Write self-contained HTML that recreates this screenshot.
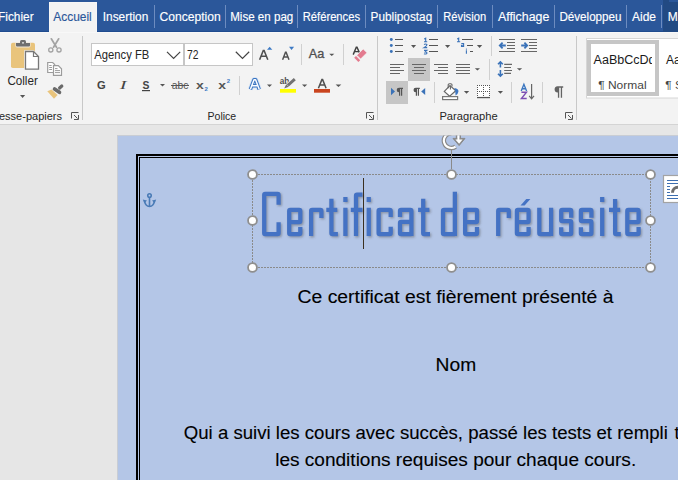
<!DOCTYPE html>
<html><head><meta charset="utf-8">
<style>
html,body{margin:0;padding:0;width:678px;height:480px;overflow:hidden;background:#e6e6e6;}
svg{display:block;font-family:"Liberation Sans",sans-serif;}
</style></head>
<body>
<svg width="678" height="480" viewBox="0 0 678 480">
<defs>
<filter id="sh" x="-10%" y="-10%" width="130%" height="130%">
<feGaussianBlur stdDeviation="0.9"/>
</filter>
</defs>
<!-- TAB BAR -->
<rect x="0" y="0" width="678" height="32" fill="#2b579a"/>
<rect x="0" y="31" width="678" height="1" fill="#204c8f"/>
<rect x="663" y="0" width="15" height="32" fill="#224a83"/>
<rect x="669" y="0" width="9" height="2" fill="#2b579a"/>
<rect x="49" y="2" width="48" height="31" fill="#f6f6f6"/><rect x="50" y="3" width="46" height="30" fill="#f3f3f3"/>
<g fill="#6d8cc0">
<rect x="154" y="5" width="1" height="23"/>
<rect x="225" y="5" width="1" height="23"/>
<rect x="297" y="5" width="1" height="23"/>
<rect x="365" y="5" width="1" height="23"/>
<rect x="437" y="5" width="1" height="23"/>
<rect x="492" y="5" width="1" height="23"/>
<rect x="554" y="5" width="1" height="23"/>
<rect x="626" y="5" width="1" height="23"/>
<rect x="661" y="5" width="1" height="23"/>
</g>
<g font-size="12" fill="#ffffff" stroke="#ffffff" stroke-width="0.15">
<text x="-2" y="21" textLength="35.6" lengthAdjust="spacingAndGlyphs">Fichier</text>
<text x="53.3" y="21" fill="#2b579a" stroke="#2b579a" textLength="38.4" lengthAdjust="spacingAndGlyphs">Accueil</text>
<text x="102.8" y="21" textLength="45.5" lengthAdjust="spacingAndGlyphs">Insertion</text>
<text x="159.5" y="21" textLength="61.2" lengthAdjust="spacingAndGlyphs">Conception</text>
<text x="230.2" y="21" textLength="63.1" lengthAdjust="spacingAndGlyphs">Mise en pag</text>
<text x="302.8" y="21" textLength="57.2" lengthAdjust="spacingAndGlyphs">Références</text>
<text x="370.6" y="21" textLength="61.6" lengthAdjust="spacingAndGlyphs">Publipostag</text>
<text x="443.3" y="21" textLength="42.8" lengthAdjust="spacingAndGlyphs">Révision</text>
<text x="497.9" y="21" textLength="51.5" lengthAdjust="spacingAndGlyphs">Affichage</text>
<text x="559.4" y="21" textLength="62.1" lengthAdjust="spacingAndGlyphs">Développeu</text>
<text x="632" y="21" textLength="24" lengthAdjust="spacingAndGlyphs">Aide</text>
<text x="667.7" y="21">M</text>
</g>
<!-- RIBBON -->
<rect x="0" y="32" width="678" height="92" fill="#f3f3f3"/>
<rect x="0" y="32" width="678" height="1" fill="#f8f8f8"/>
<rect x="0" y="124" width="678" height="1" fill="#d4d4d4"/>
<!-- group separators -->
<g fill="#c8c8c8">
<rect x="82" y="36" width="1" height="84"/>
<rect x="377" y="36" width="1" height="84"/>
<rect x="576" y="36" width="1" height="84"/>
</g>
<!-- group labels -->
<g font-size="10.5" fill="#262626">
<text x="-1" y="120" textLength="63" lengthAdjust="spacingAndGlyphs">esse-papiers</text>
<text x="207.6" y="120" textLength="28.6" lengthAdjust="spacingAndGlyphs">Police</text>
<text x="439.4" y="120" textLength="58.3" lengthAdjust="spacingAndGlyphs">Paragraphe</text>
</g>

<!-- CLIPBOARD ICONS -->
<rect x="11" y="42.8" width="24" height="25.2" rx="1.8" fill="#e9c47c"/>
<path d="M15.4,42.6 h15.2 v3.2 a1.6,1.6 0 0 1 -1.6,1.6 h-12 a1.6,1.6 0 0 1 -1.6,-1.6 z" fill="#f3f3f3" opacity="0.8"/>
<path d="M16,43 h14 v2.6 a1,1 0 0 1 -1,1 h-12 a1,1 0 0 1 -1,-1 z" fill="#6f6f6f"/>
<path d="M20,43.2 v-1.6 a1.5,1.5 0 0 1 1.5,-1.5 h3 a1.5,1.5 0 0 1 1.5,1.5 v1.6 z" fill="#6f6f6f"/>
<circle cx="23" cy="42.8" r="0.9" fill="#f3f3f3"/>
<path d="M24.2,50.3 h9.6 l6,6 v14.2 h-15.6 z" fill="#f3f3f3"/>
<path d="M25.5,51.5 h8 l5,5 v12.7 h-13 z" fill="#fff" stroke="#787878" stroke-width="1.3"/>
<path d="M33.5,51.5 v5 h5" fill="none" stroke="#787878" stroke-width="1.2"/>
<g font-size="12" fill="#262626"><text x="7.4" y="85" textLength="30.4" lengthAdjust="spacingAndGlyphs">Coller</text></g>
<path d="M20,95 h5.2 l-2.6,3 z" fill="#555"/>
<!-- scissors -->
<g stroke="#a3a3a3" fill="none" stroke-linecap="round">
<path d="M51.3,38.8 L56.5,47.2" stroke-width="1.7"/>
<path d="M58.7,38.8 L53.5,47.2" stroke-width="1.7"/>
<circle cx="50.8" cy="49.9" r="2.1" stroke-width="1.3"/>
<circle cx="59" cy="49.9" r="2.1" stroke-width="1.3"/>
</g>
<!-- copy -->
<g stroke="#9c9c9c" stroke-width="1.2" fill="#fff">
<path d="M47.7,62.5 h5 l2,2 v8 h-7 z"/>
<path d="M53.5,65.6 h4.8 l3.2,3.2 v6.6 h-8 z"/>
</g>
<g stroke="#9c9c9c" stroke-width="1">
<path d="M49.2,65.5 h2.4 M49.2,67.5 h2.8 M49.2,69.5 h2.8 M55,68.6 h2.5 M55,70.6 h5 M55,72.6 h5"/>
</g>
<!-- format painter -->
<polygon points="47.3,91.3 51.5,89.6 57.6,95 54,98.8" fill="#e9c47c"/>
<path d="M54.6,89 L59.4,92.3" stroke="#6a6a6a" stroke-width="3.8" stroke-linecap="round"/>
<path d="M59.6,88 L61.8,86" stroke="#6a6a6a" stroke-width="3.2" stroke-linecap="round"/>
<!-- launchers -->
<g fill="none" stroke="#555" stroke-width="1">
<path d="M71.5,118.5 V112.5 H78.5"/>
<path d="M74,115 L77.5,118.5 M78.5,115 V119.5 H74"/>
<path d="M366.5,118.5 V112.5 H373.5"/>
<path d="M369,115 L372.5,118.5 M373.5,115 V119.5 H369"/>
<path d="M565.5,118.5 V112.5 H572.5"/>
<path d="M568,115 L571.5,118.5 M572.5,115 V119.5 H568"/>
</g>
<!-- POLICE -->
<rect x="91.5" y="43.5" width="92" height="22" fill="#fff" stroke="#c6c6c6"/>
<rect x="184.5" y="43.5" width="68" height="22" fill="#fff" stroke="#c6c6c6"/>
<g font-size="12" fill="#262626">
<text x="94.3" y="59.3" textLength="55" lengthAdjust="spacingAndGlyphs">Agency FB</text>
<text x="186.9" y="59.3" textLength="11.5" lengthAdjust="spacingAndGlyphs">72</text>
</g>
<g fill="none" stroke="#444" stroke-width="1.2">
<polyline points="167,51.8 173.6,58.4 180.2,51.8"/>
<polyline points="235.8,51.8 242.5,58.4 249.2,51.8"/>
</g>
<g fill="#505050">
<path d="M259.6,59.8 L263.3,50.4 H264.1 L267.8,59.8 M261.1,56.2 H266.3" fill="none" stroke="#505050" stroke-width="1.55"/>
<path d="M282.6,59.8 L285.5,52.2 H286.1 L289,59.8 M283.8,56.9 H287.8" fill="none" stroke="#505050" stroke-width="1.45"/>
<text x="308.8" y="58" font-size="12" stroke="#505050" stroke-width="0.3" textLength="15.5" lengthAdjust="spacingAndGlyphs">Aa</text>
</g>
<polygon points="267,49.8 272.3,49.8 269.65,46.8" fill="#3d7ac4"/>
<polygon points="289,46.8 294.1,46.8 291.55,49.9" fill="#3d7ac4"/>
<g fill="#d0d0d0">
<rect x="301" y="44" width="1" height="21"/>
<rect x="343" y="44" width="1" height="21"/>
<rect x="239" y="76" width="1" height="19"/>
</g>
<g fill="#555">
<polygon points="329.2,53.7 334.3,53.7 331.75,56.1"/>
<polygon points="160,84 165,84 162.5,86.4"/>
<polygon points="267,84.6 272,84.6 269.5,87"/>
<polygon points="302,84.6 307.2,84.6 304.6,87"/>
<polygon points="335.6,84.6 341.3,84.6 338.45,87"/>
</g>
<!-- clear formatting -->
<path d="M353.2,54.6 L356.3,47.2 H357 L360,54 M354.6,51.6 H358.6" fill="none" stroke="#404040" stroke-width="1.45"/>
<polygon points="356.8,55.3 363.2,48.9 367,52.7 360.6,59.1" fill="#e37b8f" stroke="#f3f3f3" stroke-width="0.8"/>
<polygon points="354.2,57.8 356,56 360.2,60.2 358.4,62" fill="#e37b8f"/>
<!-- G I S -->
<text x="97" y="88.6" font-size="11.8" font-weight="bold" fill="#444" textLength="8.7" lengthAdjust="spacingAndGlyphs">G</text>
<text x="119.8" y="88.6" font-size="12" font-style="italic" fill="#444" style="font-family:'Liberation Serif',serif" textLength="6.8" lengthAdjust="spacingAndGlyphs">I</text>
<text x="142.5" y="88.6" font-size="11.8" font-weight="bold" fill="#444" textLength="6.9" lengthAdjust="spacingAndGlyphs">S</text>
<rect x="142" y="90" width="8" height="1.2" fill="#444"/>
<text x="171.8" y="88.6" font-size="11" fill="#555" textLength="16.7" lengthAdjust="spacingAndGlyphs">abc</text>
<rect x="171" y="85" width="18" height="1" fill="#555"/>
<text x="196" y="88.7" font-size="11" font-weight="bold" fill="#555" textLength="7.8" lengthAdjust="spacingAndGlyphs">x</text>
<text x="204.6" y="90.9" font-size="6" font-weight="bold" fill="#3d7ac4">2</text>
<text x="218.2" y="88.7" font-size="11" font-weight="bold" fill="#555" textLength="7.8" lengthAdjust="spacingAndGlyphs">x</text>
<text x="226.8" y="82.9" font-size="6" font-weight="bold" fill="#3d7ac4">2</text>
<!-- text effects -->
<g fill="none" stroke-linejoin="round">
<path d="M250.4,89.3 L254,79.7 H255.6 L259.2,89.3 M252.2,85.8 H257.4" stroke="#cfe0f5" stroke-width="5"/>
<path d="M250.4,89.3 L254,79.7 H255.6 L259.2,89.3 M252.2,85.8 H257.4" stroke="#3a74c0" stroke-width="3.4"/>
<path d="M250.4,89.3 L254,79.7 H255.6 L259.2,89.3 M252.2,85.8 H257.4" stroke="#fafcff" stroke-width="1.5"/>
</g>
<!-- highlight -->
<text x="279.8" y="84" font-size="8.4" font-weight="bold" fill="#505050" textLength="9.6" lengthAdjust="spacingAndGlyphs">ab</text>
<path d="M287.6,85.6 L294.6,79.2" stroke="#f3f3f3" stroke-width="4.6"/>
<path d="M287.8,85.4 L294.8,79.2" stroke="#727272" stroke-width="3"/>
<polygon points="284.2,88.6 286.2,84.2 288.8,86.8" fill="#727272"/>
<rect x="280" y="89" width="16" height="3.7" fill="#ffff00"/>
<!-- font color -->
<path d="M318.4,88.3 L321.9,79.6 H322.6 L326.1,88.3 M319.8,84.9 H324.7" fill="none" stroke="#505050" stroke-width="1.5"/>
<rect x="314" y="89" width="16" height="3.7" fill="#c9441e"/>


<!-- PARAGRAPHE -->
<g fill="#3a72b8">
<circle cx="391.3" cy="39.5" r="1.45"/><circle cx="391.3" cy="45.5" r="1.45"/><circle cx="391.3" cy="51.5" r="1.45"/>
</g>
<g stroke="#555" stroke-width="1.15" fill="none">
<path d="M395,39.5 H403 M395,45.5 H403 M395,51.5 H403"/>
<path d="M429,39.5 H438 M429,45.5 H438 M429,51.5 H438"/>
<path d="M462,39.5 H473 M467,45.5 H473 M470,51.5 H473"/>
</g>
<g stroke="#3a72b8" stroke-width="1.1" fill="none">
<path d="M424.2,38.9 L425.7,38.1 V41.9 M424,41.7 H427.2"/>
<path d="M424,44.5 Q425.6,43.6 426.9,44.5 Q427.2,45.7 424,47.6 H427.2"/>
<path d="M424,50.4 H426.9 L425.2,51.9 Q427.3,52 426.9,53.3 Q425.6,54.5 424,53.7"/>
<path d="M457.2,38.9 L458.7,38.1 V41.9 M457,41.7 H460.2"/>
<path d="M461.3,43.5 H463.6 V46.5 H461.5 V45.2 H463.6"/>
<path d="M466.4,50.2 V53.8"/>
</g>
<circle cx="466.4" cy="49.1" r="0.6" fill="#3a72b8"/>
<g fill="#555">
<polygon points="411,45 416.1,45 413.55,47.9"/>
<polygon points="445,45 450.2,45 447.6,48"/>
<polygon points="476.9,45 482.2,45 479.55,48"/>
<polygon points="474.8,68.2 480,68.2 477.4,70.6"/>
<polygon points="516.9,68.2 522.1,68.2 519.5,70.6"/>
<polygon points="463.9,91 469.2,91 466.55,93.7"/>
<polygon points="497.8,91 503,91 500.4,93.7"/>
</g>
<g fill="#d0d0d0">
<rect x="491" y="36" width="1" height="20"/>
<rect x="489" y="59" width="1" height="21"/>
<rect x="434" y="82" width="1" height="21"/>
<rect x="511" y="82" width="1" height="21"/>
<rect x="542" y="82" width="1" height="21"/>
</g>
<!-- indents -->
<g stroke="#666" stroke-width="1.1" fill="none">
<path d="M499,39.5 H515 M507,42.5 H515 M507,45.5 H515 M507,48.5 H515 M499,51.5 H515"/>
<path d="M521,39.5 H537 M529,42.5 H537 M529,45.5 H537 M529,48.5 H537 M521,51.5 H537"/>
</g>
<path d="M500.5,45.5 H505.8 M502.6,42.7 L499.8,45.5 L502.6,48.3" stroke="#3a72b8" stroke-width="1.8" fill="none"/>
<path d="M521.2,45.5 H526.5 M524.4,42.7 L527.2,45.5 L524.4,48.3" stroke="#3a72b8" stroke-width="1.8" fill="none"/>
<!-- alignment -->
<rect x="408" y="58" width="22" height="23" fill="#c6c6c6"/>
<rect x="386" y="81" width="22" height="23" fill="#c6c6c6"/>
<g stroke="#666" stroke-width="1.2" fill="none">
<path d="M390,64.5 H404 M390,67.5 H400 M390,70.5 H404 M390,73.5 H400"/>
<path d="M412,64.5 H426 M414,67.5 H424 M412,70.5 H426 M414,73.5 H424"/>
<path d="M434,64.5 H448 M438,67.5 H448 M434,70.5 H448 M438,73.5 H448"/>
<path d="M456,64.5 H470 M456,67.5 H470 M456,70.5 H470 M456,73.5 H470"/>
<path d="M504.2,64.4 H512 M504.2,67.5 H511 M504.2,70.5 H512 M504.2,73.4 H511"/>
</g>
<!-- line spacing arrows -->
<g stroke="#3a72b8" stroke-width="1.6" fill="none">
<path d="M500.4,62 V67.6 M498,64.3 L500.4,61.8 L502.8,64.3"/>
<path d="M500.4,70.1 V76 M498,73.7 L500.4,76.2 L502.8,73.7"/>
</g>
<!-- LTR / RTL -->
<polygon points="391,87.7 391,95.3 395,91.5" fill="#3a72b8"/>
<polygon points="425.2,87.9 425.2,95.1 421.2,91.5" fill="#3a72b8"/>
<g fill="#555">
<path d="M399,87.7 H403 V88.9 H402.2 V95.7 H401 V88.9 H400.2 V95.7 H399 V92.3 A2.3,2.3 0 0 1 399,87.7 Z"/>
<path d="M415.8,87.7 H419.8 V88.9 H419 V95.7 H417.8 V88.9 H417 V95.7 H415.8 V92.3 A2.3,2.3 0 0 1 415.8,87.7 Z"/>
<path d="M557.6,86.3 H563.2 V87.7 H562.1 V97.8 H560.8 V87.7 H559.2 V97.8 H557.9 V92.6 A3.15,3.15 0 0 1 557.6,86.3 Z" fill="#646464"/>
</g>
<!-- shading -->
<path d="M450,85.6 L455.8,90.8 L449.6,96.2 L444.3,91.4 Z" fill="#fff" stroke="#666" stroke-width="1.2"/>
<path d="M448.2,88.2 V85 A1.2,1.2 0 0 1 449.4,83.8 H450.8 A1.2,1.2 0 0 1 452,85 V86.5 M450.4,85.8 V89.6" fill="none" stroke="#666" stroke-width="1.1"/>
<path d="M454.3,88 Q458.8,88.6 458.4,91.8 Q458,94.2 455.6,95.6 L455.2,91 Z" fill="#3e77c2"/>
<rect x="442.6" y="96.6" width="15" height="3" fill="#fff" stroke="#777" stroke-width="1.2"/>
<!-- borders -->
<rect x="477" y="85" width="13" height="11" fill="#fff"/>
<g fill="#555">
<rect x="477" y="85" width="1" height="1"/>
<rect x="477" y="87" width="1" height="1"/>
<rect x="477" y="89" width="1" height="1"/>
<rect x="477" y="91" width="1" height="1"/>
<rect x="477" y="93" width="1" height="1"/>
<rect x="477" y="95" width="1" height="1"/>
<rect x="479" y="85" width="1" height="1"/>
<rect x="479" y="91" width="1" height="1"/>
<rect x="481" y="85" width="1" height="1"/>
<rect x="481" y="91" width="1" height="1"/>
<rect x="483" y="85" width="1" height="1"/>
<rect x="483" y="87" width="1" height="1"/>
<rect x="483" y="89" width="1" height="1"/>
<rect x="483" y="91" width="1" height="1"/>
<rect x="483" y="93" width="1" height="1"/>
<rect x="483" y="95" width="1" height="1"/>
<rect x="485" y="85" width="1" height="1"/>
<rect x="485" y="91" width="1" height="1"/>
<rect x="487" y="85" width="1" height="1"/>
<rect x="487" y="91" width="1" height="1"/>
<rect x="489" y="85" width="1" height="1"/>
<rect x="489" y="87" width="1" height="1"/>
<rect x="489" y="89" width="1" height="1"/>
<rect x="489" y="91" width="1" height="1"/>
<rect x="489" y="93" width="1" height="1"/>
<rect x="489" y="95" width="1" height="1"/>
</g>
<rect x="477" y="97" width="13" height="1.2" fill="#555"/>
<!-- sort -->
<path d="M521.2,90.9 L523.9,84.2 L526.6,90.9 M522.2,88.7 H525.6" fill="none" stroke="#3a76c0" stroke-width="1.35"/>
<path d="M521.4,92.2 H526.5 L521.4,98.5 H526.7" fill="none" stroke="#7d4eb3" stroke-width="1.4"/>
<path d="M531.6,84 V98.6 M529.2,95.8 L531.6,98.8 L534,95.8" fill="none" stroke="#666" stroke-width="1.2"/>
<!-- STYLES -->
<rect x="586.5" y="38.5" width="100" height="59.5" fill="#fff" stroke="#d6d6d6"/>
<rect x="589" y="42" width="68" height="52" fill="#fff" stroke="#c6c6c6" stroke-width="4"/>
<clipPath id="sclip"><rect x="591" y="44" width="61" height="30"/></clipPath>
<g clip-path="url(#sclip)"><text x="593.6" y="64.4" font-size="12" fill="#1a1a1a" textLength="62" lengthAdjust="spacingAndGlyphs">AaBbCcDd</text></g>
<text x="598.2" y="88.6" font-size="11.8" fill="#454545" textLength="48.4" lengthAdjust="spacingAndGlyphs">¶ Normal</text>
<text x="666" y="64.4" font-size="12" fill="#1a1a1a">AaBb</text>
<text x="665.3" y="88.6" font-size="11.8" fill="#454545">¶ Sans</text>

<!-- DOCUMENT -->
<rect x="0" y="125" width="678" height="355" fill="#e6e6e6"/>
<rect x="117" y="135" width="561" height="345" fill="#b4c6e7"/>
<rect x="117" y="135" width="561" height="1" fill="#c9cdd4"/>
<rect x="117" y="135" width="1" height="345" fill="#c9cdd4"/>
<!-- page border double line -->
<g fill="#000">
<rect x="136" y="154" width="542" height="2"/>
<rect x="136" y="154" width="2" height="326"/>
<rect x="139" y="157" width="539" height="1"/>
<rect x="139" y="157" width="1" height="323"/>
</g>

<!-- anchor -->
<g stroke="#4a7bb6" stroke-width="1.6" fill="none">
<circle cx="149.5" cy="195.5" r="1.75"/>
<path d="M149.5,197.2 V206.3"/>
<path d="M144.6,201 Q145.4,206.4 149.5,206.4 Q153.6,206.4 154.4,201"/>
</g>
<polygon points="142.8,199.6 147,200.6 144.3,203.2" fill="#4a7bb6"/>
<polygon points="156.2,199.6 152,200.6 154.7,203.2" fill="#4a7bb6"/>
<!-- title -->
<g fill="none" stroke-linejoin="round" stroke-linecap="butt">
<path d="M278.60,204.70 L278.60,194.90 Q278.60,193.80 277.50,193.80 L265.30,193.80 Q264.20,193.80 264.20,194.90 L264.20,232.90 Q264.20,234.00 265.30,234.00 L277.50,234.00 Q278.60,234.00 278.60,232.90 L278.60,222.20 M289.20,222.20 L299.20,222.20 Q300.30,222.20 300.30,221.10 L300.30,210.90 Q300.30,209.80 299.20,209.80 L290.30,209.80 Q289.20,209.80 289.20,210.90 L289.20,232.90 Q289.20,234.00 290.30,234.00 L299.20,234.00 Q300.30,234.00 300.30,232.90 L300.30,227.00 M311.10,236.10 L311.10,210.90 Q311.10,209.80 312.20,209.80 L320.30,209.80 Q321.40,209.80 321.40,210.90 L321.40,217.90 M331.40,198.80 L331.40,232.90 Q331.40,234.00 332.50,234.00 L337.90,234.00 M326.30,209.80 L337.30,209.80 M345.40,207.70 L345.40,236.10 M345.40,197.00 L345.40,201.90 M356.00,236.10 L356.00,195.60 Q356.00,194.50 357.10,194.50 L362.50,194.50 M350.80,209.80 L362.50,209.80 M368.75,207.70 L368.75,236.10 M368.75,197.00 L368.75,201.90 M390.70,216.90 L390.70,210.90 Q390.70,209.80 389.60,209.80 L379.70,209.80 Q378.60,209.80 378.60,210.90 L378.60,232.90 Q378.60,234.00 379.70,234.00 L389.60,234.00 Q390.70,234.00 390.70,232.90 L390.70,226.80 M400.00,216.90 L400.00,210.90 Q400.00,209.80 401.10,209.80 L410.30,209.80 Q411.40,209.80 411.40,210.90 L411.40,236.10 M411.40,221.90 L401.10,221.90 Q400.00,221.90 400.00,223.00 L400.00,232.90 Q400.00,234.00 401.10,234.00 L411.40,234.00 M423.20,198.80 L423.20,232.90 Q423.20,234.00 424.30,234.00 L430.00,234.00 M418.10,209.80 L429.40,209.80 M454.85,191.80 L454.85,236.10 M454.85,209.80 L444.10,209.80 Q443.00,209.80 443.00,210.90 L443.00,232.90 Q443.00,234.00 444.10,234.00 L454.85,234.00 M465.10,222.20 L475.90,222.20 Q477.00,222.20 477.00,221.10 L477.00,210.90 Q477.00,209.80 475.90,209.80 L466.20,209.80 Q465.10,209.80 465.10,210.90 L465.10,232.90 Q465.10,234.00 466.20,234.00 L475.90,234.00 Q477.00,234.00 477.00,232.90 L477.00,227.00 M498.20,236.10 L498.20,210.90 Q498.20,209.80 499.30,209.80 L507.70,209.80 Q508.80,209.80 508.80,210.90 L508.80,217.90 M516.90,222.20 L527.50,222.20 Q528.60,222.20 528.60,221.10 L528.60,210.90 Q528.60,209.80 527.50,209.80 L518.00,209.80 Q516.90,209.80 516.90,210.90 L516.90,232.90 Q516.90,234.00 518.00,234.00 L527.50,234.00 Q528.60,234.00 528.60,232.90 L528.60,227.00 M539.30,207.70 L539.30,232.90 Q539.30,234.00 540.40,234.00 L551.10,234.00 M551.10,207.70 L551.10,236.10 M571.20,217.70 L571.20,210.90 Q571.20,209.80 570.10,209.80 L562.30,209.80 Q561.20,209.80 561.20,210.90 L561.20,220.00 Q561.20,221.10 562.30,221.10 L570.10,221.10 Q571.20,221.10 571.20,222.20 L571.20,232.90 Q571.20,234.00 570.10,234.00 L562.30,234.00 Q561.20,234.00 561.20,232.90 L561.20,227.30 M591.40,217.70 L591.40,210.90 Q591.40,209.80 590.30,209.80 L582.00,209.80 Q580.90,209.80 580.90,210.90 L580.90,220.00 Q580.90,221.10 582.00,221.10 L590.30,221.10 Q591.40,221.10 591.40,222.20 L591.40,232.90 Q591.40,234.00 590.30,234.00 L582.00,234.00 Q580.90,234.00 580.90,232.90 L580.90,227.30 M602.20,207.70 L602.20,236.10 M602.20,197.00 L602.20,201.90 M615.10,199.00 L615.10,232.90 Q615.10,234.00 616.20,234.00 L620.80,234.00 M609.00,209.80 L620.20,209.80 M627.30,222.20 L637.50,222.20 Q638.60,222.20 638.60,221.10 L638.60,210.90 Q638.60,209.80 637.50,209.80 L628.40,209.80 Q627.30,209.80 627.30,210.90 L627.30,232.90 Q627.30,234.00 628.40,234.00 L637.50,234.00 Q638.60,234.00 638.60,232.90 L638.60,227.00" stroke="#555" stroke-opacity="0.45" stroke-width="4.3" transform="translate(1.2,1.4)" filter="url(#sh)"/>
<path d="M278.60,204.70 L278.60,194.90 Q278.60,193.80 277.50,193.80 L265.30,193.80 Q264.20,193.80 264.20,194.90 L264.20,232.90 Q264.20,234.00 265.30,234.00 L277.50,234.00 Q278.60,234.00 278.60,232.90 L278.60,222.20 M289.20,222.20 L299.20,222.20 Q300.30,222.20 300.30,221.10 L300.30,210.90 Q300.30,209.80 299.20,209.80 L290.30,209.80 Q289.20,209.80 289.20,210.90 L289.20,232.90 Q289.20,234.00 290.30,234.00 L299.20,234.00 Q300.30,234.00 300.30,232.90 L300.30,227.00 M311.10,236.10 L311.10,210.90 Q311.10,209.80 312.20,209.80 L320.30,209.80 Q321.40,209.80 321.40,210.90 L321.40,217.90 M331.40,198.80 L331.40,232.90 Q331.40,234.00 332.50,234.00 L337.90,234.00 M326.30,209.80 L337.30,209.80 M345.40,207.70 L345.40,236.10 M345.40,197.00 L345.40,201.90 M356.00,236.10 L356.00,195.60 Q356.00,194.50 357.10,194.50 L362.50,194.50 M350.80,209.80 L362.50,209.80 M368.75,207.70 L368.75,236.10 M368.75,197.00 L368.75,201.90 M390.70,216.90 L390.70,210.90 Q390.70,209.80 389.60,209.80 L379.70,209.80 Q378.60,209.80 378.60,210.90 L378.60,232.90 Q378.60,234.00 379.70,234.00 L389.60,234.00 Q390.70,234.00 390.70,232.90 L390.70,226.80 M400.00,216.90 L400.00,210.90 Q400.00,209.80 401.10,209.80 L410.30,209.80 Q411.40,209.80 411.40,210.90 L411.40,236.10 M411.40,221.90 L401.10,221.90 Q400.00,221.90 400.00,223.00 L400.00,232.90 Q400.00,234.00 401.10,234.00 L411.40,234.00 M423.20,198.80 L423.20,232.90 Q423.20,234.00 424.30,234.00 L430.00,234.00 M418.10,209.80 L429.40,209.80 M454.85,191.80 L454.85,236.10 M454.85,209.80 L444.10,209.80 Q443.00,209.80 443.00,210.90 L443.00,232.90 Q443.00,234.00 444.10,234.00 L454.85,234.00 M465.10,222.20 L475.90,222.20 Q477.00,222.20 477.00,221.10 L477.00,210.90 Q477.00,209.80 475.90,209.80 L466.20,209.80 Q465.10,209.80 465.10,210.90 L465.10,232.90 Q465.10,234.00 466.20,234.00 L475.90,234.00 Q477.00,234.00 477.00,232.90 L477.00,227.00 M498.20,236.10 L498.20,210.90 Q498.20,209.80 499.30,209.80 L507.70,209.80 Q508.80,209.80 508.80,210.90 L508.80,217.90 M516.90,222.20 L527.50,222.20 Q528.60,222.20 528.60,221.10 L528.60,210.90 Q528.60,209.80 527.50,209.80 L518.00,209.80 Q516.90,209.80 516.90,210.90 L516.90,232.90 Q516.90,234.00 518.00,234.00 L527.50,234.00 Q528.60,234.00 528.60,232.90 L528.60,227.00 M539.30,207.70 L539.30,232.90 Q539.30,234.00 540.40,234.00 L551.10,234.00 M551.10,207.70 L551.10,236.10 M571.20,217.70 L571.20,210.90 Q571.20,209.80 570.10,209.80 L562.30,209.80 Q561.20,209.80 561.20,210.90 L561.20,220.00 Q561.20,221.10 562.30,221.10 L570.10,221.10 Q571.20,221.10 571.20,222.20 L571.20,232.90 Q571.20,234.00 570.10,234.00 L562.30,234.00 Q561.20,234.00 561.20,232.90 L561.20,227.30 M591.40,217.70 L591.40,210.90 Q591.40,209.80 590.30,209.80 L582.00,209.80 Q580.90,209.80 580.90,210.90 L580.90,220.00 Q580.90,221.10 582.00,221.10 L590.30,221.10 Q591.40,221.10 591.40,222.20 L591.40,232.90 Q591.40,234.00 590.30,234.00 L582.00,234.00 Q580.90,234.00 580.90,232.90 L580.90,227.30 M602.20,207.70 L602.20,236.10 M602.20,197.00 L602.20,201.90 M615.10,199.00 L615.10,232.90 Q615.10,234.00 616.20,234.00 L620.80,234.00 M609.00,209.80 L620.20,209.80 M627.30,222.20 L637.50,222.20 Q638.60,222.20 638.60,221.10 L638.60,210.90 Q638.60,209.80 637.50,209.80 L628.40,209.80 Q627.30,209.80 627.30,210.90 L627.30,232.90 Q627.30,234.00 628.40,234.00 L637.50,234.00 Q638.60,234.00 638.60,232.90 L638.60,227.00" stroke="#4472c4" stroke-width="4.25"/>
</g>
<polygon points="520.5,205.6 524.6,205.6 530.4,199.1 526.3,199.1" fill="#4472c4"/>
<!-- cursor -->
<rect x="363" y="178" width="1" height="71" fill="#3b3020"/>
<!-- text box frame -->
<rect x="252.5" y="174.5" width="398" height="93" fill="none" stroke="#8a8a8a" stroke-width="1" stroke-dasharray="2,1" stroke-dashoffset="0.5"/>
<path d="M451.5,149.5 V169" stroke="#8a8a8a" stroke-width="1"/>
<g fill="#fff" stroke="#8f8f8f" stroke-width="1.8">
<circle cx="252.5" cy="174.5" r="4.45"/><circle cx="451.5" cy="174.5" r="4.45"/><circle cx="650.5" cy="174.5" r="4.45"/>
<circle cx="252.5" cy="220.5" r="4.45"/><circle cx="650.5" cy="220.5" r="4.45"/>
<circle cx="252.5" cy="267.5" r="4.45"/><circle cx="451.5" cy="267.5" r="4.45"/><circle cx="650.5" cy="267.5" r="4.45"/>
</g>
<!-- rotation -->
<clipPath id="pclip"><rect x="117" y="135.5" width="561" height="40"/></clipPath>
<g clip-path="url(#pclip)" fill="none">
<path d="M451.5,133.2 A7.4,7.4 0 1 0 455.6,146.6" stroke="#8a8a8a" stroke-width="4.4"/>
<path d="M456.6,132 V139.5 M460.2,132 V139.5" stroke="#8a8a8a" stroke-width="1.6"/>
<polygon points="453,138.4 465,138.4 459.1,145.6" fill="#8a8a8a" stroke="#8a8a8a" stroke-width="1" stroke-linejoin="round"/>
<path d="M451.5,133.2 A7.4,7.4 0 1 0 455.6,146.6" stroke="#fff" stroke-width="2.1"/>
<path d="M458.4,132 V140" stroke="#fff" stroke-width="2"/>
<polygon points="455.4,139.6 462.6,139.6 459.1,143.8" fill="#fff"/>
</g>
<!-- layout options -->
<rect x="663.5" y="175.5" width="20" height="27" fill="#fff" stroke="#a3a3a3" stroke-width="1.2"/>
<g stroke="#3c6eb0" stroke-width="1.2">
<path d="M667,180.5 H678 M667,183.5 H678 M667,186.5 H670 M667,189.5 H670 M667,192.5 H670 M667,195.5 H678 M667,198.5 H678"/>
</g>
<path d="M672.5,192.8 A5.5,5.5 0 0 1 678,187.3" fill="none" stroke="#6e6e6e" stroke-width="3"/>

<!-- body text -->
<g font-size="18.3" fill="#000" stroke="#000" stroke-width="0.12">
<text x="297.6" y="303" textLength="315.8" lengthAdjust="spacingAndGlyphs">Ce certificat est fièrement présenté à</text>
<text x="435.6" y="370.8" textLength="40.6" lengthAdjust="spacingAndGlyphs">Nom</text>
<text x="183.8" y="438.6" textLength="484" lengthAdjust="spacingAndGlyphs">Qui a suivi les cours avec succès, passé les tests et rempli</text>
<text x="674.6" y="438.6">toutes</text>
<text x="275.2" y="466.4" textLength="361" lengthAdjust="spacingAndGlyphs">les conditions requises pour chaque cours.</text>
</g>
</svg>
</body></html>
